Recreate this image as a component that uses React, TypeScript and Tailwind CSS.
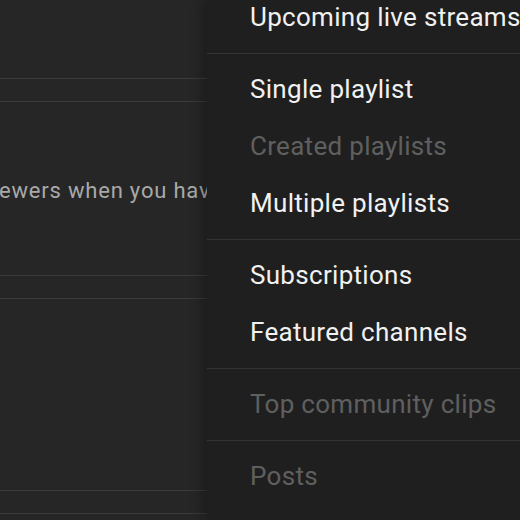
const groups = [
  [{ label: 'Upcoming live streams', on: true }],
  [
    { label: 'Single playlist', on: true },
    { label: 'Created playlists', on: false },
    { label: 'Multiple playlists', on: true },
  ],
  [
    { label: 'Subscriptions', on: true },
    { label: 'Featured channels', on: true },
  ],
  [{ label: 'Top community clips', on: false }],
  [{ label: 'Posts', on: false }],
]

export default function App() {
  return (
    <div className="flex h-[520px] w-[520px] overflow-hidden bg-[#1f1f1f] font-['Roboto',sans-serif]">
      {/* page behind the menu */}
      <div className="w-[207px] shrink-0 overflow-hidden bg-[#262626]">
        <div className="h-[78px]" />
        <div className="h-[24px] border-y border-[#3a3a3a]" />
        <div className="flex h-[173px] items-center pt-[4px]">
          <span className="ml-[-1px] whitespace-nowrap text-[22px] tracking-[0.8px] text-[#a9a9a9]">
            ewers when you have
          </span>
        </div>
        <div className="h-[24px] border-y border-[#3a3a3a]" />
        <div className="h-[191px]" />
        <div className="h-[24px] border-y border-[#3a3a3a]" />
      </div>

      {/* dropdown menu */}
      <div className="relative flex-1 overflow-hidden bg-[#1f1f1f] shadow-[-6px_0_10px_rgba(0,0,0,0.25)]">
        <div className="mt-[-18px]">
          {groups.map((g, i) => (
            <div key={i} className={`py-[7px] ${i > 0 ? 'border-t border-[#333333]' : ''}`}>
              {g.map((it) => (
                <div
                  key={it.label}
                  className={`flex h-[57px] items-center whitespace-nowrap pl-[43px] text-[26px] tracking-[0.3px] ${
                    it.on ? 'text-[#f1f1f1]' : 'text-[#5f5f5f]'
                  }`}
                >
                  {it.label}
                </div>
              ))}
            </div>
          ))}
        </div>
      </div>
    </div>
  )
}
